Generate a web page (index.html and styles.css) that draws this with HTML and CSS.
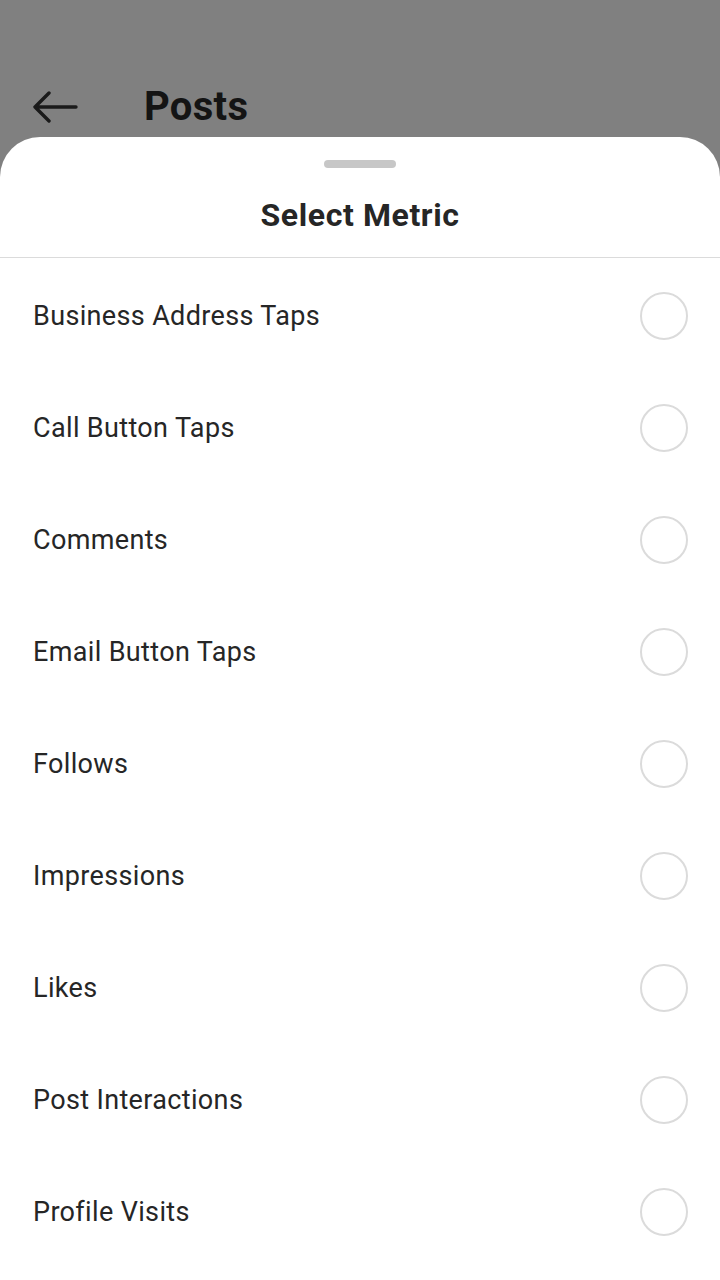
FILE: index.html
```html
<!DOCTYPE html>
<html lang="en">
<head>
    <meta charset="UTF-8">
    <meta name="viewport" content="width=device-width, initial-scale=1.0">
    <title>Select Metric</title>
    <link rel="stylesheet" href="styles.css">
</head>
<body>
    <header class="topbar">
        <svg class="back" width="46" height="32" viewBox="0 0 46 32">
            <path d="M44 16H3M17 2L3 16l14 14" fill="none" stroke="#1a1a1a" stroke-width="3.4" stroke-linecap="round" stroke-linejoin="round"/>
        </svg>
        <h1 class="page-title">Posts</h1>
    </header>

    <section class="sheet">
        <div class="sheet-head">
            <div class="handle"></div>
            <h2 class="sheet-title">Select Metric</h2>
        </div>
        <ul class="metrics">
            <li class="metric"><span>Business Address Taps</span><span class="radio"></span></li>
            <li class="metric"><span>Call Button Taps</span><span class="radio"></span></li>
            <li class="metric"><span>Comments</span><span class="radio"></span></li>
            <li class="metric"><span>Email Button Taps</span><span class="radio"></span></li>
            <li class="metric"><span>Follows</span><span class="radio"></span></li>
            <li class="metric"><span>Impressions</span><span class="radio"></span></li>
            <li class="metric"><span>Likes</span><span class="radio"></span></li>
            <li class="metric"><span>Post Interactions</span><span class="radio"></span></li>
            <li class="metric"><span>Profile Visits</span><span class="radio"></span></li>
        </ul>
    </section>
</body>
</html>
```
FILE: styles.css
```css
html, body {
    height: 100%;
}

body {
    margin: 0;
    background-color: #808080;
    font-family: Roboto, "Liberation Sans", sans-serif;
    color: #262626;
    display: flex;
    flex-direction: column;
    overflow: hidden;
}

.topbar {
    height: 137px;
    box-sizing: border-box;
    display: flex;
    align-items: center;
    padding: 77px 0 0 32px;
}

.back {
    display: block;
}

.page-title {
    margin: 0 0 0 66px;
    font-size: 40px;
    font-weight: 700;
    line-height: 46px;
    letter-spacing: 0.3px;
    color: #141414;
}

.sheet {
    flex: 1;
    background-color: #fff;
    border-radius: 40px 40px 0 0;
}

.sheet-head {
    height: 120px;
    border-bottom: 1px solid #dbdbdb;
    display: flex;
    flex-direction: column;
    align-items: center;
}

.handle {
    width: 72px;
    height: 8px;
    margin-top: 23px;
    border-radius: 4px;
    background-color: #c7c7c7;
}

.sheet-title {
    margin: 27px 0 0;
    font-size: 32px;
    line-height: 40px;
    font-weight: 700;
    letter-spacing: 0.6px;
    color: #262626;
}

.metrics {
    list-style: none;
    margin: 2px 0 0;
    padding: 0;
}

.metric {
    height: 112px;
    display: flex;
    align-items: center;
    justify-content: space-between;
    padding: 0 32px 0 33px;
    font-size: 27px;
    letter-spacing: 0.35px;
}

.radio {
    width: 44px;
    height: 44px;
    border: 2px solid #dbdbdb;
    border-radius: 50%;
}
```
